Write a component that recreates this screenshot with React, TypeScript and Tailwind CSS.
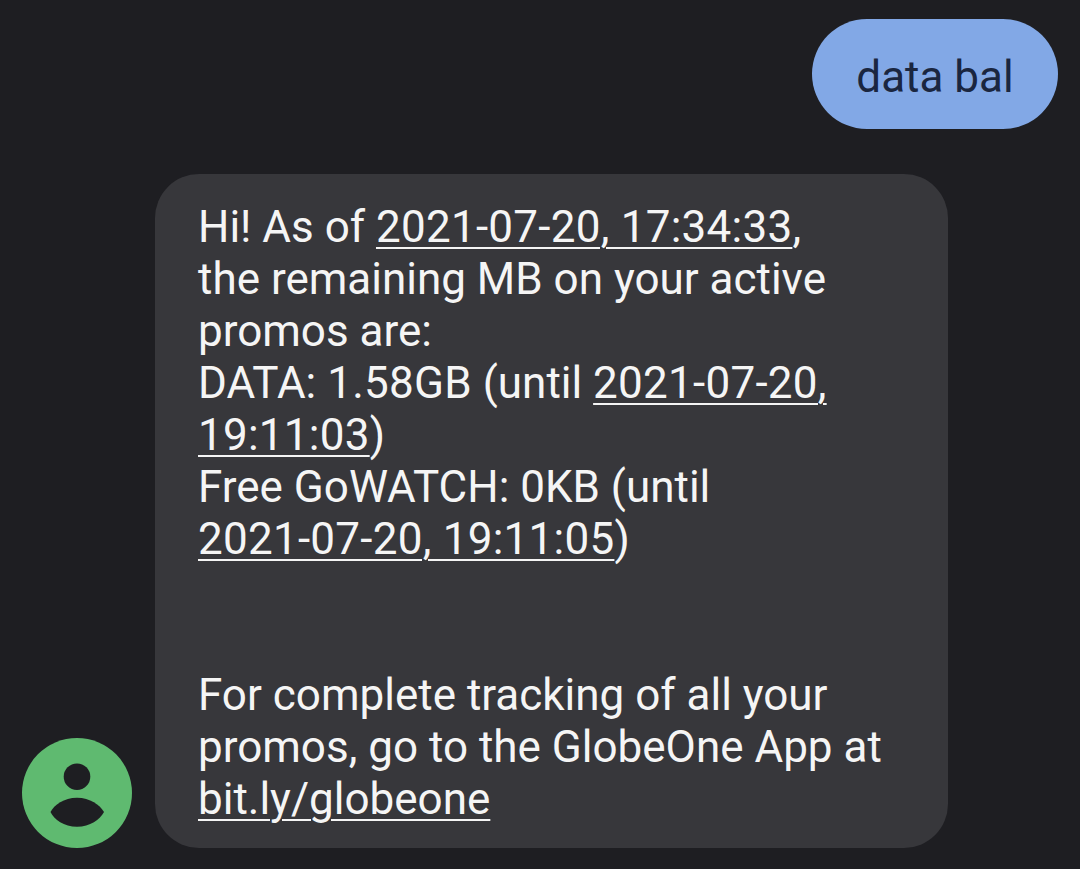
const DATE_LINK = 'underline decoration-[2px] underline-offset-[5px] tracking-[0.25px]';
const LINK = 'underline decoration-[2px] underline-offset-[5px]';

function Avatar() {
  return (
    <div className="flex h-[110px] w-[110px] shrink-0 items-center justify-center rounded-full bg-[#5fba70]">
      <svg width="110" height="110" viewBox="0 0 110 110" fill="#1e1e22">
        <circle cx="55" cy="38.7" r="13.3" />
        <path d="M28.5 74 C32 67 42 59.7 55 59.7 C68 59.7 78 67 82 74 C78 81.5 68 88.7 55 88.7 C42 88.7 32 81.5 28.5 74 Z" />
      </svg>
    </div>
  );
}

export default function App() {
  return (
    <div className="flex h-[869px] w-[1080px] flex-col overflow-hidden bg-[#1e1e22] pt-[19px] font-['Roboto',sans-serif] text-[44px] leading-[52px]">
      <div className="flex justify-end pr-[22px]">
        <div className="flex h-[110px] w-[246px] items-center justify-center rounded-[55px] bg-[#82a8e6] pt-[5px] text-[#1a2640]">
          data bal
        </div>
      </div>

      <div className="mt-[45px] flex items-end pl-[22px]">
        <Avatar />
        <div className="ml-[23px] h-[674px] w-[793px] rounded-[44px] bg-[#37373b] pl-[43px] pt-[27px] text-[#f5f5f5]">
          <p className="whitespace-nowrap">
            Hi! As of <span className={DATE_LINK}>2021-07-20, 17:34:33</span>,<br />
            the remaining MB on your active<br />
            promos are:<br />
            DATA: <span className="tracking-[0.25px]">1.58GB</span> (until <span className={DATE_LINK}>2021-07-20,</span><br />
            <span className={DATE_LINK}>19:11:03</span>)<br />
            Free GoWATCH: 0KB (until<br />
            <span className={DATE_LINK}>2021-07-20, 19:11:05</span>)<br />
            <br />
            <br />
            For complete tracking of all your<br />
            promos, go to the GlobeOne App at<br />
            <span className={LINK}>bit.ly/globeone</span>
          </p>
        </div>
      </div>
    </div>
  );
}
